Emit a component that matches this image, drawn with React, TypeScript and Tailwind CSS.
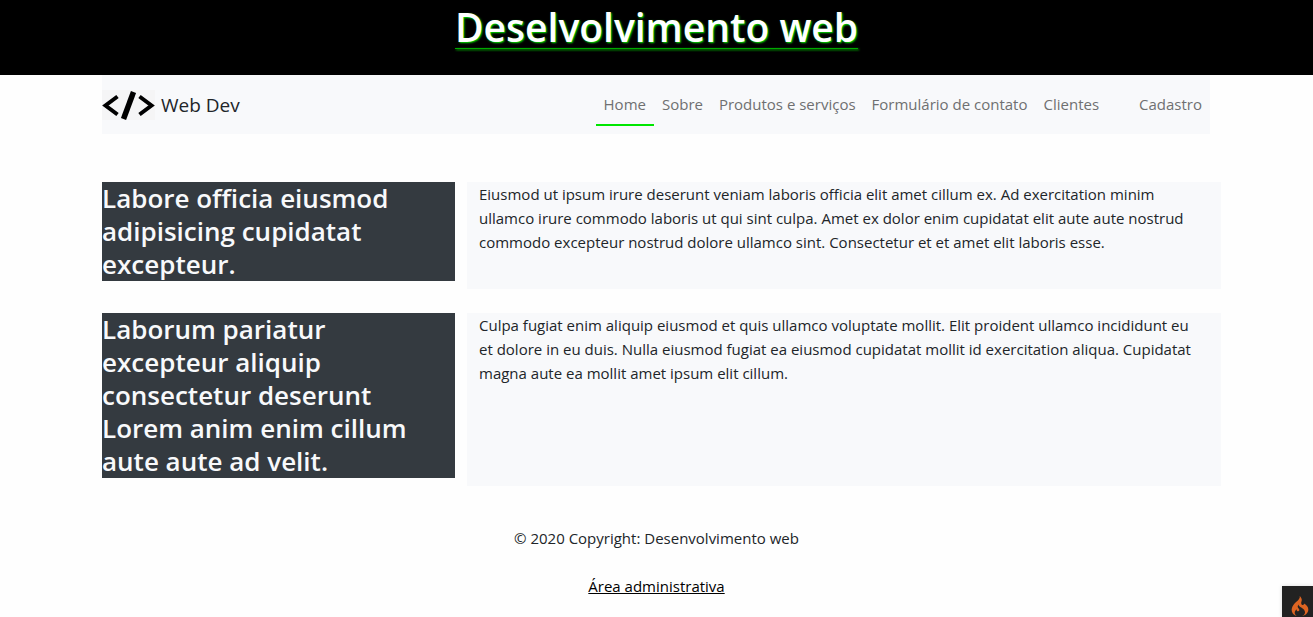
import { SiCodeigniter } from "react-icons/si";

const links = ["Sobre", "Produtos e serviços", "Formulário de contato", "Clientes"];

const sections = [
  {
    title: "Labore officia eiusmod adipisicing cupidatat excepteur.",
    text: "Eiusmod ut ipsum irure deserunt veniam laboris officia elit amet cillum ex. Ad exercitation minim ullamco irure commodo laboris ut qui sint culpa. Amet ex dolor enim cupidatat elit aute aute nostrud commodo excepteur nostrud dolore ullamco sint. Consectetur et et amet elit laboris esse.",
  },
  {
    title: "Laborum pariatur excepteur aliquip consectetur deserunt Lorem anim enim cillum aute aute ad velit.",
    text: "Culpa fugiat enim aliquip eiusmod et quis ullamco voluptate mollit. Elit proident ullamco incididunt eu et dolore in eu duis. Nulla eiusmod fugiat ea eiusmod cupidatat mollit id exercitation aliqua. Cupidatat magna aute ea mollit amet ipsum elit cillum.",
  },
];

function Logo() {
  return (
    <svg viewBox="0 0 53 30" className="h-[30px] w-[53px] bg-[#f5f5f6]" fill="none" stroke="#000" aria-hidden="true">
      <path d="M15.500 6.500 3.500 15.500l12 9" strokeWidth="4" />
      <path d="M37.500 6.500 49.500 15.500l-12 9" strokeWidth="4" />
      <path d="M31.500 2 21.500 29" strokeWidth="5.500" />
    </svg>
  );
}

export default function App() {
  return (
    <div className="min-h-screen bg-[#fefefe] font-['Open_Sans','Noto_Sans',sans-serif] text-[15px] leading-6 text-[#212529]">
      <header className="bg-black pb-[21px] text-center">
        <h1 className="text-[39px] leading-[54px] font-semibold">
          <a href="#" className="text-white underline decoration-[#00a800] decoration-1 underline-offset-[6px] [text-shadow:1px_1px_2px_#00e600]">
            Deselvolvimento web
          </a>
        </h1>
      </header>

      <div className="pr-[103px] pl-[102px]">
        <nav className="flex items-center justify-between bg-[#f8f9fb] pt-2 pb-2">
          <a href="#" className="flex items-center gap-1.5 text-[19px]">
            <Logo />
            <span>Web Dev</span>
          </a>
          <ul className="flex text-[#6f7071]">
            <li>
              <a href="#" className="block border-b-2 border-[#00e600] px-2 pt-[9px] pb-2">Home</a>
            </li>
            {links.map((label) => (
              <li key={label}>
                <a href="#" className="block px-2 pt-[9px] pb-2">{label}</a>
              </li>
            ))}
            <li className="ml-6">
              <a href="#" className="block px-2 pt-[9px] pb-2">Cadastro</a>
            </li>
          </ul>
        </nav>
      </div>

      <main className="flex flex-col gap-6 pt-12 pr-[92px] pl-[102px]">
        {sections.map((s) => (
          <section key={s.title} className="grid grid-cols-[353fr_754fr] gap-3">
            <div className="pb-2">
              <h2 className="bg-[#343a40] pr-8 text-[26px] leading-[33px] font-semibold text-[#f8f9fb]">{s.title}</h2>
            </div>
            <p className="bg-[#f8f9fb] pr-5 pl-3">{s.text}</p>
          </section>
        ))}
      </main>

      <footer className="flex flex-col items-center gap-6 pt-10">
        <p>© 2020 Copyright: Desenvolvimento web</p>
        <a href="#" className="text-black underline">Área administrativa</a>
      </footer>

      <button aria-label="Debug" className="fixed right-0 bottom-0 flex h-[31px] w-[31px] items-end justify-center bg-[#222] pb-px pl-1 text-[#dd6422] shadow-[0_0_4px_#ddd]">
        <SiCodeigniter size={20} />
      </button>
    </div>
  );
}
